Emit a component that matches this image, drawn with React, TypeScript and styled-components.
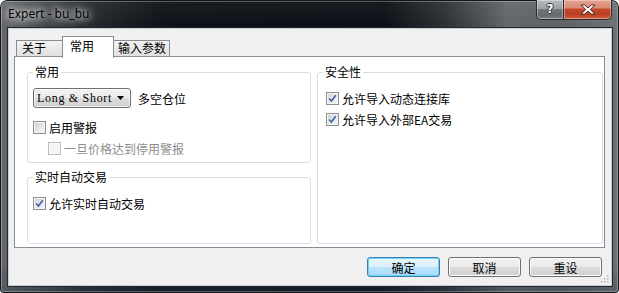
import React from "react";
import styled, { createGlobalStyle } from "styled-components";

const CJK = `"Noto Sans CJK SC", "Noto Sans", sans-serif`;

const GlobalStyle = createGlobalStyle`
  html, body { margin: 0; padding: 0; background: #ffffff; }
  body { font-family: ${CJK}; font-size: 12px; color: #000; }
  * { box-sizing: border-box; }
`;

const Window = styled.div`
  position: relative;
  width: 619px;
  height: 293px;
  display: flex;
  flex-direction: column;
  padding: 0 7px 7px 8px;
  border-radius: 7px 7px 4px 4px;
  background:
    linear-gradient(180deg, rgba(255,255,255,0.06) 0%, rgba(0,0,0,0) 10%, rgba(0,0,0,0) 90%, rgba(40,60,80,0.35) 100%),
    linear-gradient(90deg, #66696d 0%, #4a4e52 6%, #25292e 14%, #0d1016 26%, #0a0d13 62%, #2c3035 72%, #62666a 82%, #5d6165 90%, #6d7175 100%);
  box-shadow: inset 0 0 0 1px #141618, inset 0 0 0 2px rgba(255,255,255,0.28);
`;

const TitleBar = styled.div`
  height: 28px;
  display: flex;
  align-items: flex-start;
  justify-content: space-between;
`;

const Title = styled.div`
  margin-top: 6px;
  padding: 0 2px 0 0;
  font-family: "Noto Sans", "Open Sans", sans-serif;
  font-size: 12px;
  line-height: 16px;
  color: #000;
  text-shadow: 0 0 6px #fff, 0 0 10px rgba(255,255,255,0.85), 0 0 16px rgba(255,255,255,0.6);
`;

const Captions = styled.div`
  display: flex;
  height: 20px;
`;

const CaptionBtn = styled.div<{ $close?: boolean }>`
  width: ${(p) => (p.$close ? 48 : 28)}px;
  height: 20px;
  display: flex;
  align-items: center;
  justify-content: center;
  border: 1px solid #2b2d30;
  border-top: none;
  border-left: ${(p) => (p.$close ? "none" : "1px solid #2b2d30")};
  border-radius: ${(p) => (p.$close ? "0 0 5px 0" : "0 0 0 5px")};
  background: ${(p) =>
    p.$close
      ? "linear-gradient(180deg, #e4a391 0%, #d98a73 40%, #c5472c 50%, #b83d22 75%, #d4603f 100%)"
      : "linear-gradient(180deg, #b6babe 0%, #9ea2a6 45%, #74787d 50%, #676b70 80%, #7c8085 100%)"};
  box-shadow: inset 0 0 0 1px rgba(255,255,255,0.35);
`;

const HelpGlyph = styled.span`
  font-family: "DejaVu Sans", sans-serif;
  font-weight: bold;
  font-size: 12px;
  line-height: 12px;
  color: #fff;
  margin-top: -1px;
  text-shadow: 1px 0 0 #333, -1px 0 0 #333, 0 1px 0 #333, 0 -1px 0 #333;
`;

const Client = styled.div`
  position: relative;
  flex: 1;
  display: flex;
  flex-direction: column;
  padding: 7px 6px 8px 5px;
  background: #f0f0f0;
  border: 1px solid #c9cdd1;
  box-shadow: 0 0 0 1px #25282b;
`;

const TabStrip = styled.div`
  position: relative;
  z-index: 2;
  height: 20px;
  display: flex;
  align-items: flex-end;
  padding-left: 2px;
`;

const Tab = styled.div<{ $active?: boolean; $w: number; $pl: number }>`
  width: ${(p) => p.$w}px;
  height: ${(p) => (p.$active ? 22 : 16)}px;
  margin-left: -1px;
  margin-bottom: ${(p) => (p.$active ? -2 : 0)}px;
  padding-left: ${(p) => p.$pl}px;
  border: 1px solid #898c95;
  border-bottom: none;
  line-height: ${(p) => (p.$active ? 17 : 14)}px;
  font-size: 12px;
  background: ${(p) => (p.$active ? "#ffffff" : "linear-gradient(180deg, #f3f3f3 0%, #e9e9e9 50%, #e0e0e0 100%)")};
  position: relative;
  z-index: ${(p) => (p.$active ? 2 : 1)};
  &:first-child { margin-left: 0; }
`;

const Panel = styled.div`
  position: relative;
  z-index: 1;
  height: 192px;
  display: flex;
  gap: 6px;
  padding: 7px 1px 3px 12px;
  background: #ffffff;
  border: 1px solid #898c95;
`;

const Column = styled.div<{ $w: number }>`
  width: ${(p) => p.$w}px;
  display: flex;
  flex-direction: column;
  gap: 6px;
`;

const Group = styled.fieldset<{ $h: number; $pl: number }>`
  margin: 0;
  min-width: 0;
  height: ${(p) => p.$h}px;
  padding: 12px 4px 0 ${(p) => p.$pl}px;
  border: 1px solid #d5dfe5;
  border-radius: 3px;
  display: flex;
  flex-direction: column;
`;

const Legend = styled.legend<{ $ml?: number }>`
  padding: 0 2px;
  margin-left: ${(p) => p.$ml || 0}px;
  font-size: 12px;
  line-height: 16px;
`;

const ComboRow = styled.div`
  display: flex;
  align-items: center;
  gap: 7px;
  margin-top: -4px;
  margin-bottom: 13px;
`;

const Combo = styled.div`
  width: 98px;
  height: 20px;
  display: flex;
  align-items: center;
  justify-content: space-between;
  padding: 0 6px 0 3px;
  border: 1px solid #707070;
  border-radius: 3px;
  background: linear-gradient(180deg, #f2f2f2 0%, #ebebeb 50%, #dddddd 50%, #cfcfcf 100%);
  box-shadow: inset 0 0 0 1px rgba(255,255,255,0.7);
  font-family: "Liberation Serif", "DejaVu Serif", serif;
  font-size: 12px;
  letter-spacing: 0.7px;
`;

const CheckRow = styled.div<{ $indent?: number; $disabled?: boolean }>`
  display: flex;
  align-items: center;
  gap: 3px;
  height: 13px;
  margin-bottom: 8px;
  padding-left: ${(p) => p.$indent || 0}px;
  color: ${(p) => (p.$disabled ? "#8d8d8d" : "#000")};
  font-size: 12px;
  line-height: 13px;
  white-space: nowrap;
`;

const Box = styled.span<{ $disabled?: boolean }>`
  width: 13px;
  height: 13px;
  flex: none;
  display: flex;
  align-items: center;
  justify-content: center;
  border: 1px solid ${(p) => (p.$disabled ? "#bcbcbc" : "#8e8f8f")};
  background: ${(p) =>
    p.$disabled ? "#f4f4f4" : "linear-gradient(135deg, #c9cdd3 0%, #e4e6e9 50%, #f7f7f7 100%)"};
  box-shadow: inset 0 0 0 1px ${(p) => (p.$disabled ? "#fbfbfb" : "#f4f4f4")};
`;

const ButtonRow = styled.div`
  display: flex;
  justify-content: flex-end;
  gap: 8px;
  margin-top: 9px;
  margin-right: 3px;
`;

const Button = styled.div<{ $default?: boolean }>`
  width: 73px;
  height: 20px;
  display: flex;
  align-items: center;
  justify-content: center;
  font-size: 12px;
  border: 1px solid ${(p) => (p.$default ? "#3c7fb1" : "#707070")};
  border-radius: 3px;
  background: ${(p) =>
    p.$default
      ? "linear-gradient(180deg, #eaf6fd 0%, #d9f0fc 50%, #bee6fd 50%, #a7d9f5 100%)"
      : "linear-gradient(180deg, #f2f2f2 0%, #ebebeb 50%, #dddddd 50%, #cfcfcf 100%)"};
  box-shadow: inset 0 0 0 1px ${(p) => (p.$default ? "#6ed4f5" : "#fcfcfc")};
`;

const Grip = styled.svg`
  position: absolute;
  right: 2px;
  bottom: 2px;
`;

const Check = ({ checked, disabled }: { checked?: boolean; disabled?: boolean }) => (
  <Box $disabled={disabled}>
    {checked && (
      <svg width="9" height="9" viewBox="0 0 9 9">
        <path d="M1.2 4.6 L3.4 7 L7.8 1.3" fill="none" stroke="#3f5aa6" strokeWidth="1.5" />
      </svg>
    )}
  </Box>
);

const CheckItem = ({ label, checked, disabled, indent }: { label: string; checked?: boolean; disabled?: boolean; indent?: number }) => (
  <CheckRow $indent={indent} $disabled={disabled}>
    <Check checked={checked} disabled={disabled} />
    {label}
  </CheckRow>
);

export default function App() {
  return (
    <>
      <GlobalStyle />
      <Window>
        <TitleBar>
          <Title>Expert - bu_bu</Title>
          <Captions>
            <CaptionBtn>
              <HelpGlyph>?</HelpGlyph>
            </CaptionBtn>
            <CaptionBtn $close>
              <svg width="16" height="11" viewBox="0 0 16 11">
                <path
                  d="M1 1 H4.6 L8 4 L11.4 1 H15 L10.2 5.5 L15 10 H11.4 L8 7 L4.6 10 H1 L5.8 5.5 Z"
                  fill="#ffffff"
                  stroke="#4a2a24"
                  strokeWidth="1"
                />
              </svg>
            </CaptionBtn>
          </Captions>
        </TitleBar>
        <Client>
          <TabStrip>
            <Tab $w={47} $pl={5}>关于</Tab>
            <Tab $w={52} $pl={7} $active>常用</Tab>
            <Tab $w={57} $pl={4}>输入参数</Tab>
          </TabStrip>
          <Panel>
            <Column $w={284}>
              <Group $h={99} $pl={5}>
                <Legend>常用</Legend>
                <ComboRow>
                  <Combo>
                    <span>Long &amp; Short</span>
                    <svg width="7" height="4" viewBox="0 0 7 4">
                      <path d="M0 0 H7 L3.5 4 Z" fill="#000" />
                    </svg>
                  </Combo>
                  多空仓位
                </ComboRow>
                <CheckItem label="启用警报" />
                <CheckItem label="一旦价格达到停用警报" disabled indent={15} />
              </Group>
              <Group $h={75} $pl={5}>
                <Legend>实时自动交易</Legend>
                <CheckItem label="允许实时自动交易" checked />
              </Group>
            </Column>
            <Column $w={286}>
              <Group $h={180} $pl={8}>
                <Legend $ml={-3}>安全性</Legend>
                <CheckItem label="允许导入动态连接库" checked />
                <CheckItem label="允许导入外部EA交易" checked />
              </Group>
            </Column>
          </Panel>
          <ButtonRow>
            <Button $default>确定</Button>
            <Button>取消</Button>
            <Button>重设</Button>
          </ButtonRow>
          <Grip width="8" height="8" viewBox="0 0 8 8">
            <g fill="#b5b5b5">
              <rect x="6" y="0" width="1.5" height="1.5" />
              <rect x="3" y="3" width="1.5" height="1.5" />
              <rect x="6" y="3" width="1.5" height="1.5" />
              <rect x="0" y="6" width="1.5" height="1.5" />
              <rect x="3" y="6" width="1.5" height="1.5" />
              <rect x="6" y="6" width="1.5" height="1.5" />
            </g>
          </Grip>
        </Client>
      </Window>
    </>
  );
}
